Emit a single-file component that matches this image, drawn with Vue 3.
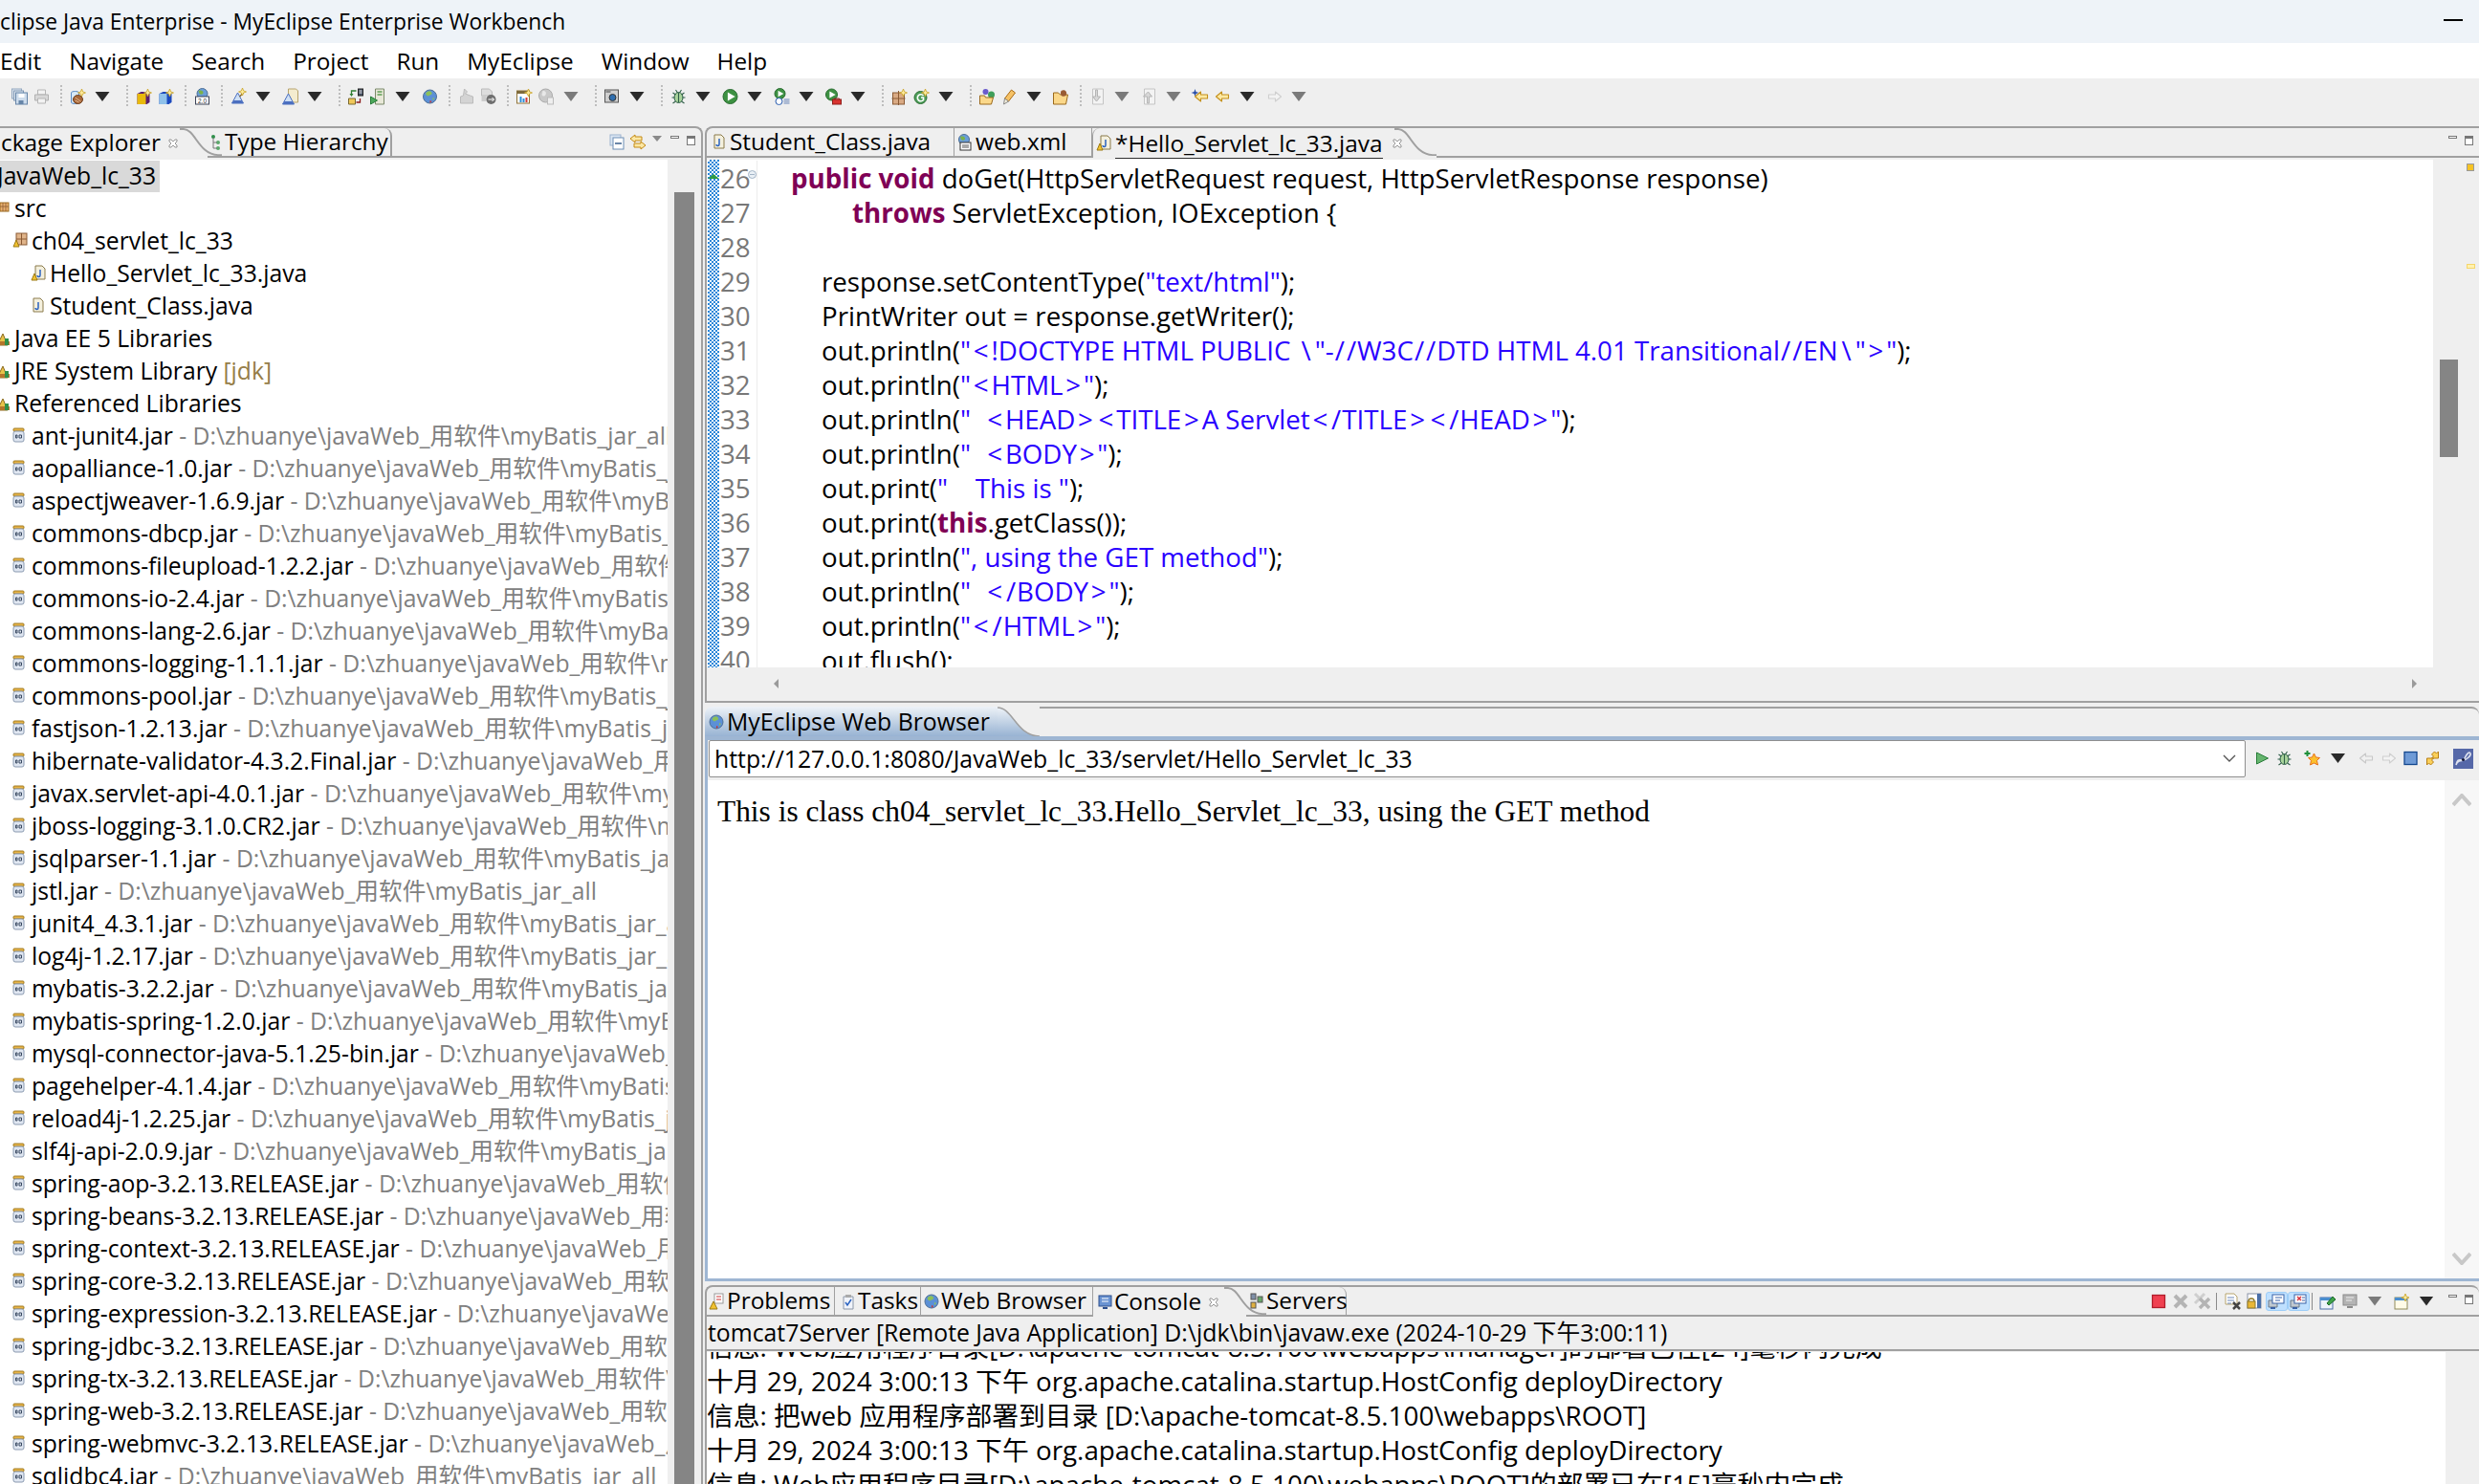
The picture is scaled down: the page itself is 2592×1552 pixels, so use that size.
<template>
  <div class="workbench">
    <div class="titlebar">
      <span class="title-text">clipse Java Enterprise - MyEclipse Enterprise Workbench</span>
      <span class="win-min"></span>
    </div>
    <div class="menubar">
      <span v-for="m in menus" :key="m" class="menu-item">{{ m }}</span>
    </div>
    <div class="toolbar">
      <template v-for="(t, i) in toolbar" :key="i">
        <span v-if="t === '|'" class="tb-sep"></span>
        <span v-else-if="t === 'v' || t === 'g'" class="tb-caret" :class="{ muted: t === 'g' }"></span>
        <svg v-else class="ic tb-ic" viewBox="0 0 18 18" v-html="icons[t]"></svg>
      </template>
    </div>

    <div class="main">
      <!-- package explorer -->
      <section class="left-panel">
        <div class="tabbar">
          <div class="tab pe-tab">
            <span>ckage Explorer</span>
            <svg class="close" viewBox="0 0 12 12" v-html="icons.close"></svg>
          </div>
          <svg class="tab-curve" viewBox="0 0 44 32" preserveAspectRatio="none"><path d="M0 1H4C16 1 20 29 40 29H44" fill="none" stroke="#a0a0a0" stroke-width="2" /></svg>
          <div class="tab th-tab">
            <svg class="ic" viewBox="0 0 18 18" v-html="icons.hierarchy"></svg>
            <span>Type Hierarchy</span>
          </div>
          <div class="tab-fill">
            <svg class="ic tool-a" viewBox="0 0 18 18" v-html="icons.collapse"></svg>
            <svg class="ic" viewBox="0 0 18 18" v-html="icons.link"></svg>
            <span class="view-menu"></span>
            <span class="min-btn"></span>
            <span class="max-btn"></span>
          </div>
        </div>
        <div class="left-body">
          <div class="tree">
            <div v-for="r in tree" :key="r.name" class="tree-row" :class="'d' + r.depth">
              <svg v-if="r.icon" class="ic tree-ic" viewBox="0 0 18 18" v-html="icons[r.icon]"></svg>
              <span class="tree-name" :class="{ selected: r.selected }">{{ r.name }}</span>
              <span v-if="r.deco" class="deco" :class="{ jdk: r.jdk }">&nbsp;{{ r.deco }}</span>
            </div>
          </div>
          <div class="vtrack">
            <div class="vthumb"></div>
          </div>
        </div>
      </section>

      <div class="right-col">
        <!-- editor -->
        <section class="editor-panel">
          <div class="tabbar">
            <div class="tab ed-tab tab-student">
              <svg class="ic" viewBox="0 0 18 18" v-html="icons.java"></svg>
              <span>Student_Class.java</span>
            </div>
            <div class="tab ed-tab tab-web">
              <svg class="ic" viewBox="0 0 18 18" v-html="icons.webxml"></svg>
              <span>web.xml</span>
            </div>
            <div class="tab ed-active">
              <svg class="ic" viewBox="0 0 18 18" v-html="icons.javaWarn"></svg>
              <span class="underlined">*Hello_Servlet_lc_33.java</span>
              <svg class="close" viewBox="0 0 12 12" v-html="icons.close"></svg>
            </div>
            <svg class="tab-curve" viewBox="0 0 44 32" preserveAspectRatio="none"><path d="M0 1H4C16 1 20 29 40 29H44" fill="none" stroke="#a0a0a0" stroke-width="2" /></svg>
            <div class="tab-fill">
              <span class="min-btn"></span>
              <span class="max-btn"></span>
            </div>
          </div>
          <div class="editor-body">
            <div class="ruler"></div>
            <div class="lines">
              <div v-for="l in code" :key="l.n" class="line">
                <span class="num">{{ l.n }}</span>
                <span class="src" :style="{ paddingLeft: l.indent * 32 + 'px' }"><span v-for="(p, i) in l.parts" :key="i" :class="p[0]">{{ p[1] }}</span></span>
              </div>
              <span class="fold"></span>
              <span class="override"></span>
            </div>
            <div class="overview">
              <span class="mark-a"></span>
              <span class="mark-b"></span>
              <div class="ed-thumb"></div>
            </div>
          </div>
          <div class="hscroll">
            <span class="arrow-l"></span>
            <span class="arrow-r"></span>
          </div>
        </section>

        <!-- browser -->
        <section class="browser-panel">
          <div class="browser-tabs">
            <div class="blue-tab">
              <svg class="ic" viewBox="0 0 18 18" v-html="icons.globe"></svg>
              <span>MyEclipse Web Browser</span>
              <svg class="close light" viewBox="0 0 12 12" v-html="icons.close"></svg>
            </div>
            <svg class="blue-curve" viewBox="0 0 44 31" preserveAspectRatio="none">
              <defs>
                <linearGradient id="blueGrad" x1="0" y1="0" x2="0" y2="1">
                  <stop offset="0" stop-color="#edf2f7" />
                  <stop offset="1" stop-color="#98b3d3" />
                </linearGradient>
              </defs>
              <path d="M0 1C16 1 20 31 44 31H0Z" fill="url(#blueGrad)" />
              <path d="M0 1C16 1 20 31 44 31" fill="none" stroke="#a0a0a0" stroke-width="1.5" />
            </svg>
            <div class="tab-fill plain"></div>
          </div>
          <div class="browser-frame">
            <div class="url-row">
              <div class="url-box">
                <span>http://127.0.0.1:8080/JavaWeb_lc_33/servlet/Hello_Servlet_lc_33</span>
                <svg class="combo" viewBox="0 0 14 8"><path d="M1 1l6 6 6-6" fill="none" stroke="#555" stroke-width="1.4" /></svg>
              </div>
              <svg v-for="b in browserTools" :key="b.i" class="ic tb-ic" :class="b.cls" viewBox="0 0 18 18" v-html="icons[b.i]"></svg>
              <span class="tb-caret br-caret"></span>
              <svg v-for="b in browserTools2" :key="b.i" class="ic tb-ic" :class="b.cls" viewBox="0 0 18 18" v-html="icons[b.i]"></svg>
              <svg class="br-logo" viewBox="0 0 21 21">
                <rect width="21" height="21" fill="#5668a8" />
                <path d="M3 17C6 9 9 16 12 10S17 3 18 5 14 12 10 12 5 10 3 17Z" fill="none" stroke="#dfe3ef" stroke-width="1.6" />
                <circle cx="10.500" cy="11.500" r="1.600" fill="#15193a" />
              </svg>
            </div>
            <div class="page-wrap">
              <div class="page">This is class ch04_servlet_lc_33.Hello_Servlet_lc_33, using the GET method</div>
              <div class="page-scroll">
                <svg class="page-arrow" viewBox="0 0 20 14"><path d="M1 12L10 2l9 10" fill="none" stroke="#c8c8c8" stroke-width="4" /></svg>
                <svg class="page-arrow" viewBox="0 0 20 14"><path d="M1 2l9 10 9-10" fill="none" stroke="#c8c8c8" stroke-width="4" /></svg>
              </div>
            </div>
          </div>
        </section>

        <!-- console -->
        <section class="console-panel">
          <div class="tabbar">
            <div class="tab con-tab tab-problems">
              <svg class="ic" viewBox="0 0 18 18" v-html="icons.problems"></svg>
              <span>Problems</span>
            </div>
            <div class="tab con-tab tab-tasks">
              <svg class="ic" viewBox="0 0 18 18" v-html="icons.tasks"></svg>
              <span>Tasks</span>
            </div>
            <div class="tab con-tab tab-web2">
              <svg class="ic" viewBox="0 0 18 18" v-html="icons.globe"></svg>
              <span>Web Browser</span>
            </div>
            <div class="tab con-active">
              <svg class="ic" viewBox="0 0 18 18" v-html="icons.monitor"></svg>
              <span>Console</span>
              <svg class="close" viewBox="0 0 12 12" v-html="icons.close"></svg>
            </div>
            <svg class="tab-curve con-curve" viewBox="0 0 44 32" preserveAspectRatio="none"><path d="M0 1H4C16 1 20 29 40 29H44" fill="none" stroke="#a0a0a0" stroke-width="2" /></svg>
            <div class="tab con-tab tab-servers">
              <svg class="ic" viewBox="0 0 18 18" v-html="icons.servers"></svg>
              <span>Servers</span>
            </div>
            <div class="tab-fill con-tools">
              <template v-for="(t, i) in consoleTools" :key="i">
                <span v-if="t === '|'" class="con-sep"></span>
                <span v-else-if="t === 'v' || t === 'g'" class="tb-caret" :class="{ muted: t === 'g' }"></span>
                <span v-else class="con-btn" :class="{ on: t === 'dispOut' || t === 'dispErr' }">
                  <svg class="ic" viewBox="0 0 18 18" v-html="icons[t]"></svg>
                </span>
              </template>
              <span class="min-btn"></span>
              <span class="max-btn"></span>
            </div>
          </div>
          <div class="status-row">tomcat7Server [Remote Java Application] D:\jdk\bin\javaw.exe (2024-10-29 下午3:00:11)</div>
          <div class="console-body">
            <div class="console-text">
              <div v-for="(c, i) in consoleLines" :key="i" class="con-line">{{ c }}</div>
            </div>
            <div class="con-stripe"></div>
          </div>
        </section>
      </div>
    </div>
  </div>
</template>

<script setup>
const menus = ['Edit', 'Navigate', 'Search', 'Project', 'Run', 'MyEclipse', 'Window', 'Help']

const toolbar = [
  'floppy', 'floppies', 'print', '|', 'wizJar', 'v', '|', 'cubeA', 'cubeB', '|', 'web20', '|',
  'flask', 'v', 'flaskDoc', 'v', '|', 'deploy', 'serverRun', 'v', 'globe', '|', 'grayJar', 'grayGo', '|',
  'chart', 'grayGlobe', 'g', '|', 'camera', 'v', '|', 'bug', 'v', 'run', 'v', 'runClock', 'v', 'runTool', 'v', '|',
  'pkgNew', 'classG', 'v', '|', 'openProj', 'pencil', 'v', 'folderBean', '|',
  'noteDown', 'g', 'noteUp', 'g', 'starBack', 'back', 'v', 'fwdGray', 'g'
]

const browserTools = [
  { i: 'play' },
  { i: 'bug' },
  { i: 'starPlus', cls: 'ml6' }
]
const browserTools2 = [
  { i: 'backGray', cls: 'ml2' },
  { i: 'fwdGray' },
  { i: 'square' },
  { i: 'refresh' }
]

const consoleTools = ['stop', 'grayX', 'grayXX', '|', 'docClear', 'lockDoc', 'dispOut', 'dispErr', '|', 'pin', 'grayMon', 'g', 'newCon', 'v']

const jarPath = 'D:\\zhuanye\\javaWeb_用软件\\myBatis_jar_all'
const jars = [
  'ant-junit4.jar', 'aopalliance-1.0.jar', 'aspectjweaver-1.6.9.jar', 'commons-dbcp.jar', 'commons-fileupload-1.2.2.jar',
  'commons-io-2.4.jar', 'commons-lang-2.6.jar', 'commons-logging-1.1.1.jar', 'commons-pool.jar', 'fastjson-1.2.13.jar',
  'hibernate-validator-4.3.2.Final.jar', 'javax.servlet-api-4.0.1.jar', 'jboss-logging-3.1.0.CR2.jar', 'jsqlparser-1.1.jar',
  'jstl.jar', 'junit4_4.3.1.jar', 'log4j-1.2.17.jar', 'mybatis-3.2.2.jar', 'mybatis-spring-1.2.0.jar',
  'mysql-connector-java-5.1.25-bin.jar', 'pagehelper-4.1.4.jar', 'reload4j-1.2.25.jar', 'slf4j-api-2.0.9.jar',
  'spring-aop-3.2.13.RELEASE.jar', 'spring-beans-3.2.13.RELEASE.jar', 'spring-context-3.2.13.RELEASE.jar',
  'spring-core-3.2.13.RELEASE.jar', 'spring-expression-3.2.13.RELEASE.jar', 'spring-jdbc-3.2.13.RELEASE.jar',
  'spring-tx-3.2.13.RELEASE.jar', 'spring-web-3.2.13.RELEASE.jar', 'spring-webmvc-3.2.13.RELEASE.jar', 'sqljdbc4.jar'
]

const tree = [
  { name: 'JavaWeb_lc_33', depth: 'x', selected: true },
  { name: 'src', depth: 0, icon: 'srcFolder' },
  { name: 'ch04_servlet_lc_33', depth: 1, icon: 'pkg' },
  { name: 'Hello_Servlet_lc_33.java', depth: 2, icon: 'javaWarn' },
  { name: 'Student_Class.java', depth: 2, icon: 'java' },
  { name: 'Java EE 5 Libraries', depth: 0, icon: 'lib' },
  { name: 'JRE System Library', depth: 0, icon: 'lib', deco: '[jdk]', jdk: true },
  { name: 'Referenced Libraries', depth: 0, icon: 'lib' },
  ...jars.map(j => ({ name: j, depth: 1, icon: 'jar', deco: '- ' + jarPath }))
]

// the editor font has wider brackets and slashes than ours, they get a bit of padding
const markChars = { '<': 'str br', '>': 'str br', '/': 'str sl', '\\': 'str bs' }
const str = s => s.split(/([<>/\\])/).filter(Boolean).map(c => [markChars[c] || 'str', c])

const code = [
  { n: 26, indent: 1, parts: [['kw', 'public void'], ['', ' doGet(HttpServletRequest request, HttpServletResponse response)']] },
  { n: 27, indent: 3, parts: [['kw', 'throws'], ['', ' ServletException, IOException {']] },
  { n: 28, indent: 0, parts: [] },
  { n: 29, indent: 2, parts: [['', 'response.setContentType('], ['str', '"text/html"'], ['', ');']] },
  { n: 30, indent: 2, parts: [['', 'PrintWriter out = response.getWriter();']] },
  { n: 31, indent: 2, parts: [['', 'out.println('], ...str('"<!DOCTYPE HTML PUBLIC \\"-//W3C//DTD HTML 4.01 Transitional//EN\\">"'), ['', ');']] },
  { n: 32, indent: 2, parts: [['', 'out.println('], ...str('"<HTML>"'), ['', ');']] },
  { n: 33, indent: 2, parts: [['', 'out.println('], ...str('"  <HEAD><TITLE>A Servlet</TITLE></HEAD>"'), ['', ');']] },
  { n: 34, indent: 2, parts: [['', 'out.println('], ...str('"  <BODY>"'), ['', ');']] },
  { n: 35, indent: 2, parts: [['', 'out.print('], ['str', '"    This is "'], ['', ');']] },
  { n: 36, indent: 2, parts: [['', 'out.print('], ['kw', 'this'], ['', '.getClass());']] },
  { n: 37, indent: 2, parts: [['', 'out.println('], ['str', '", using the GET method"'], ['', ');']] },
  { n: 38, indent: 2, parts: [['', 'out.println('], ...str('"  </BODY>"'), ['', ');']] },
  { n: 39, indent: 2, parts: [['', 'out.println('], ...str('"</HTML>"'), ['', ');']] },
  { n: 40, indent: 2, parts: [['', 'out.flush();']] }
]

const consoleLines = [
  '信息: Web应用程序目录[D:\\apache-tomcat-8.5.100\\webapps\\manager]的部署已在[24]毫秒内完成',
  '十月 29, 2024 3:00:13 下午 org.apache.catalina.startup.HostConfig deployDirectory',
  '信息: 把web 应用程序部署到目录 [D:\\apache-tomcat-8.5.100\\webapps\\ROOT]',
  '十月 29, 2024 3:00:13 下午 org.apache.catalina.startup.HostConfig deployDirectory',
  '信息: Web应用程序目录[D:\\apache-tomcat-8.5.100\\webapps\\ROOT]的部署已在[15]毫秒内完成'
]

// small pieces the 18x18 icons are put together from
const spark = (x, y) => `<path d="M${x} ${y - 4}l1.1 2.900 2.900 1.100-2.900 1.100-1.100 2.900-1.100-2.900-2.900-1.100 2.900-1.100z" fill="#fdeb9b" stroke="#c9a227" stroke-width=".8"/>`
const arrowL = (fill, stroke, dx = 0) => `<path transform="translate(${dx} 0)" d="M2 9l6-5v3h7v4H8v3z" fill="${fill}" stroke="${stroke}" stroke-width="1.100" stroke-linejoin="round"/>`
const arrowR = (fill, stroke) => `<path d="M16 9l-6-5v3H3v4h7v3z" fill="${fill}" stroke="${stroke}" stroke-width="1.100" stroke-linejoin="round"/>`
const globeShape = '<circle cx="9" cy="9" r="7" fill="#5c90d6" stroke="#4d6f96"/><path d="M6 4c2-1 4-1 5 1s-2 2-3 3-2 0-3-1 0-2 1-3zM12 10l2 1-2 2z" fill="#8cc05a"/><path d="M9 13l2 1-2 2z" fill="#c33"/>'
const runBall = (cx, cy, r) => `<circle cx="${cx}" cy="${cy}" r="${r}" fill="#3d9142" stroke="#2a6d31"/><path d="M${cx - r * 0.35} ${cy - r * 0.6}l${r * 1.05} ${r * 0.6}-${r * 1.05} ${r * 0.6}z" fill="#fff"/>`
const bugShape = '<ellipse cx="9" cy="10" rx="4.500" ry="5.500" fill="#a9d49c" stroke="#2f5e48"/><path d="M9 5v10M3 5l3 2M15 5l-3 2M2 10h3M16 10h-3M3 16l3-2M15 16l-3-2M6 2l2 3M12 2l-2 3" stroke="#2f5e48" fill="none" stroke-width="1.100"/>'

const icons = {
  close: '<path d="M2 2h2l2 2 2-2h2v2L8 6l2 2v2H8L6 8l-2 2H2V8l2-2-2-2z" fill="#fff" stroke="#8a8a8a" stroke-width=".9"/>',
  hierarchy: '<circle cx="6" cy="3" r="2" fill="#2f8f4a"/><circle cx="11" cy="9" r="2" fill="#5aa86a"/><circle cx="11" cy="15" r="2" fill="#5aa86a"/><path d="M6 4v11h4M6 9h4" fill="none" stroke="#777"/>',
  collapse: '<rect x="1" y="1" width="11" height="11" fill="#dbe6f3" stroke="#9db4cf"/><rect x="4" y="4" width="11" height="12" fill="#fff" stroke="#6d8eb5"/><path d="M6 10h7" stroke="#3a5f8c" stroke-width="1.500"/>',
  link: '<path d="M1 5l5-4v2h7v4H6v2z" fill="#fbe7a4" stroke="#c48a14"/><path d="M17 12l-5-4v2H5v4h7v2z" fill="#fbe7a4" stroke="#c48a14"/>',
  floppy: '<rect x="-6" y="3" width="13" height="13" fill="#e8e8e8" stroke="#bbb"/>',
  floppies: '<rect x="1" y="1" width="10" height="10" fill="#dfe7f0" stroke="#93a8c0"/><rect x="3" y="3" width="10" height="10" fill="#dfe7f0" stroke="#7e97b4"/><rect x="5" y="5" width="12" height="12" fill="#cddcec" stroke="#6685a8"/><rect x="8" y="6" width="6" height="4" fill="#fff"/><rect x="8" y="13" width="5" height="4" fill="#6685a8"/>',
  print: '<path d="M5 2h8v5H5z" fill="#f2f2f2" stroke="#b5b5b5"/><path d="M2 7h14v6H2z" fill="#d8d8d8" stroke="#b0b0b0"/><path d="M5 11h8v5H5z" fill="#f2f2f2" stroke="#b5b5b5"/>',
  wizJar: `<path d="M2 5c0-2 8-2 8 0v10c0 2-8 2-8 0z" fill="#d6e8f8" stroke="#5c8cc4"/><ellipse cx="9" cy="12" rx="5" ry="4.500" fill="#a8673a" stroke="#6e3f1e"/><path d="M6 10l6 4M6 13l4 2" stroke="#e0b48c"/>${spark(13, 5)}`,
  cubeA: `<path d="M2 6l4-2h9v11l-3 2H2z" fill="#5a1f6d"/><path d="M2 6h9v11H2z" fill="#e8b90c"/>${spark(13, 5)}`,
  cubeB: `<path d="M2 6l4-2h9v11l-3 2H2z" fill="#1b49bd"/><path d="M2 6h8v11H2z" fill="#8fc1ea"/>${spark(13, 5)}`,
  web20: '<circle cx="9" cy="6" r="5.500" fill="#6a9ed8" stroke="#4d6f96"/><path d="M5 3c3-1 5 0 5 2s-3 2-4 1z" fill="#7cb24a"/><rect x="2" y="9" width="14" height="8" fill="#fff" stroke="#3b4256"/><text x="9" y="15.500" font-size="6.500" font-family="Liberation Sans, sans-serif" text-anchor="middle" fill="#333">2.0</text>',
  flask: `<path d="M8 5L2 16h12z" fill="#cfe0f5" stroke="#4b6fc0"/><path d="M4 13h8l2 3H2z" fill="#4b6fc0"/><path d="M10 9l4-4" stroke="#8a6a2a" stroke-width="1.500"/>${spark(13, 4)}`,
  flaskDoc: '<path d="M7 1h8l2 2v12H7z" fill="#f4eccf" stroke="#b6a36c"/><path d="M7 6L1 17h12z" fill="#cfe0f5" stroke="#4b6fc0"/><path d="M3 14h8l2 3H1z" fill="#4b6fc0"/>',
  deploy: '<rect x="11" y="1" width="5" height="7" fill="#4a5568" stroke="#222"/><path d="M12 3h3M12 5h3" stroke="#ddd"/><path d="M9 3H4v4" fill="none" stroke="#2f7d32" stroke-width="1.300"/><path d="M2 6l2 3 2-3z" fill="#2f7d32"/><path d="M1 11h7v6H1z" fill="#f0c85a" stroke="#7a6a30"/><path d="M9 15h4v-4" fill="none" stroke="#8c1c1c" stroke-width="1.300"/>',
  serverRun: '<path d="M6 1h9v16H6z" fill="#e8e8d8" stroke="#7b8a6a"/><path d="M8 4h5M8 7h5" stroke="#5f9e55" stroke-width="1.500"/><path d="M1 9l7 4-7 4z" fill="#4ca85a" stroke="#2a7d3a"/>',
  globe: globeShape,
  grayJar: '<path d="M7 1l3 3-2 2 5 2 3 1v7H3V9l3-1z" fill="#d4d4d4" stroke="#bbb"/>',
  grayGo: '<path d="M2 1h8l3 3v4H2z" fill="#ddd" stroke="#bbb"/><path d="M2 8h5v6H2z" fill="#ccc"/><circle cx="12" cy="12" r="5" fill="#6f6f6f"/><path d="M9 12h6M13 10l2 2-2 2" fill="none" stroke="#fff"/>',
  chart: `<rect x="1" y="3" width="13" height="13" fill="#fff" stroke="#8f7336"/><path d="M1 3h13v3H1z" fill="#7d6a3c"/><path d="M4 15V9h2v6zM7 15v-4h2v4z" fill="#2f8ed8"/><path d="M10 15v-5h2v5z" fill="#cf3a3a"/>${spark(13, 5)}`,
  grayGlobe: '<circle cx="8" cy="8" r="7" fill="#c9c9c9" stroke="#aaa"/><path d="M5 3c3 0 4 2 3 4s-3 2-4 0z" fill="#e8e8e8"/><rect x="10" y="10" width="6" height="7" fill="#eee" stroke="#bbb"/>',
  camera: '<rect x="1" y="2" width="14" height="13" fill="#cfcfcf" stroke="#555"/><rect x="2" y="3" width="5" height="2" fill="#8a8a8a"/><circle cx="9" cy="10" r="3.500" fill="#2f6fb0" stroke="#333"/>',
  bug: bugShape,
  run: runBall(9, 9, 7.5),
  runClock: `${runBall(7, 6, 5.5)}<circle cx="6" cy="14" r="3.500" fill="#fff" stroke="#2a5db0"/><path d="M11 12h6M11 14h6M11 16h6" stroke="#6a86b8"/>`,
  runTool: `${runBall(7, 7, 6)}<rect x="8" y="12" width="9" height="5" fill="#d9332f" stroke="#8f1f1c"/><path d="M10 12v-1h5v1" fill="none" stroke="#8f1f1c"/>`,
  pkgNew: `<rect x="2" y="5" width="12" height="12" fill="#d9aa84" stroke="#8a5a34"/><path d="M8 3v15M1 11h14" stroke="#8a5a34"/>${spark(13, 5)}`,
  classG: `<circle cx="8" cy="10" r="6.500" fill="#4e9e5a" stroke="#2a6d31"/><path d="M11 8a3.500 3.500 0 1 0 0 4.500V10H8.500" fill="none" stroke="#fff" stroke-width="1.600"/>${spark(13, 5)}`,
  openProj: '<circle cx="7" cy="4" r="3" fill="#6a5acd"/><circle cx="13" cy="7" r="3.500" fill="#3f9e5a"/><path d="M1 8h5l1 2h8l-2 7H1z" fill="#fbd88a" stroke="#9c6a1c"/>',
  pencil: '<path d="M11 2l4 3-7 9-4-3z" fill="#f6c266" stroke="#a86a14"/><path d="M4 11l4 3-5 3z" fill="#f5f0dc" stroke="#888"/>',
  folderBean: '<path d="M1 5h5l2 2h8l-2 10H1z" fill="#fbd88a" stroke="#9c6a1c"/><path d="M9 3c4-2 7 1 5 5-3 2-7 0-5-5z" fill="#9a5c34"/>',
  noteDown: '<path d="M4 1h11v16H4z" fill="#f3f3f3" stroke="#c4c4c4"/><path d="M7 2v7H4l4 5 4-5H9V2z" fill="#d8d8d8" stroke="#b4b4b4"/>',
  noteUp: '<path d="M4 1h11v16H4z" fill="#f3f3f3" stroke="#c4c4c4"/><path d="M7 16V9H3l5-5 4 5H9v7z" fill="#d8d8d8" stroke="#b4b4b4"/>',
  starBack: `<path d="M3 1l1 3 3 1-3 1-1 3-1-3-3-1 3-1z" fill="#2a4fa8"/>${arrowL('#fde9a2', '#c4901c', 1)}`,
  back: arrowL('#fde9a2', '#c4901c'),
  backGray: arrowL('#f0f0f0', '#c8c8c8'),
  fwdGray: arrowR('#f3f3f3', '#cfcfcf'),
  play: '<path d="M3 3l12 6-12 6z" fill="#66b56e" stroke="#2a7d3a"/>',
  starPlus: '<path d="M11 4l2 4 4 .5-3 3 1 4.500-4-2-4 2 1-4.500-3-3 4-.5z" fill="#fbc02d" stroke="#e8701a"/><path d="M1 4h6M4 1v6" stroke="#1f8f3a" stroke-width="2"/>',
  square: '<rect x="2.500" y="2.500" width="13" height="13" fill="#6f9bd6" stroke="#14488f" stroke-width="1.300"/>',
  refresh: '<path d="M15 2v7h-7l2-2-2-2 3-3 2 2z" fill="#fbd05a" stroke="#b77f14"/><path d="M3 16V9h7l-2 2 2 2-3 3-2-2z" fill="#fbd05a" stroke="#b77f14"/>',
  problems: '<rect x="6" y="1" width="9" height="10" fill="#fff" stroke="#9a9a9a"/><path d="M8 4h5M8 7h5" stroke="#c33"/><path d="M5 9l4 8H1z" fill="#f2c230" stroke="#9b7a14"/>',
  tasks: '<path d="M4 4h10v13H4z" fill="#f0f3fa" stroke="#8b96a8"/><rect x="6" y="2" width="6" height="3" fill="#aaa"/><path d="M6 10l2 3 4-6" fill="none" stroke="#2a62c0" stroke-width="1.500"/>',
  monitor: '<rect x="2" y="2" width="13" height="11" fill="#6a93d2" stroke="#2c4e8c"/><path d="M5 5h7M5 8h7" stroke="#fff"/><path d="M6 15h5" stroke="#2c4e8c" stroke-width="2"/>',
  servers: '<rect x="3" y="1" width="5" height="6" fill="#7f8fa8" stroke="#555"/><rect x="10" y="4" width="5" height="6" fill="#6aa86a" stroke="#555"/><rect x="3" y="10" width="5" height="6" fill="#e0b040" stroke="#555"/>',
  stop: '<rect x="2.500" y="2.500" width="13" height="13" fill="#ef4050" stroke="#b01c2a" stroke-width="1.300"/>',
  grayX: '<path d="M3 3l12 12M15 3L3 15" stroke="#b4b4b4" stroke-width="4"/>',
  grayXX: '<path d="M1 1l10 10M11 1L1 11" stroke="#cfcfcf" stroke-width="3"/><path d="M6 6l10 10M16 6L6 16" stroke="#b4b4b4" stroke-width="3.500"/>',
  docClear: '<path d="M2 1h9l3 3v8H2z" fill="#fff" stroke="#b6a36c"/><path d="M4 5h7M4 8h7M4 11h4" stroke="#6a86b8"/><path d="M10 10l7 7M17 10l-7 7" stroke="#444" stroke-width="2.500"/>',
  lockDoc: '<rect x="2" y="1" width="14" height="15" fill="#fff" stroke="#8a93a8"/><rect x="12" y="1" width="4" height="15" fill="#4a6fa8"/><path d="M3 9a3 3 0 0 1 6 0" fill="none" stroke="#8f7a2a" stroke-width="1.300"/><rect x="2" y="9" width="8" height="7" fill="#e9b737" stroke="#8f7a2a"/>',
  dispOut: '<path d="M1 8h9v7H1z" fill="#c0c8d0" stroke="#6a7a8a"/><rect x="5" y="2" width="12" height="9" fill="#fff" stroke="#3a62a8"/><path d="M8 5h7M8 8h5" stroke="#3a62a8"/><path d="M3 16h5" stroke="#3a62a8" stroke-width="2"/>',
  dispErr: '<path d="M1 8h9v7H1z" fill="#c0c8d0" stroke="#6a7a8a"/><rect x="5" y="2" width="12" height="9" fill="#fff" stroke="#3a62a8"/><path d="M8 4l4 4M12 4L8 8" stroke="#d9333f" stroke-width="1.500"/><path d="M13 5h3M13 8h3" stroke="#3a62a8"/><path d="M3 16h5" stroke="#3a62a8" stroke-width="2"/>',
  pin: '<rect x="1" y="5" width="13" height="12" fill="#eef4fb" stroke="#4a6fa8"/><path d="M1 5h13v3H1z" fill="#4a8ed0"/><path d="M8 11l6-7 3 3-7 6z" fill="#3fa34a" stroke="#1f6a2a"/>',
  grayMon: '<rect x="2" y="2" width="14" height="11" fill="#b4b4b4" stroke="#8a8a8a"/><path d="M5 5h8M5 8h6" stroke="#eee"/><path d="M6 15h6" stroke="#8a8a8a" stroke-width="2"/>',
  newCon: `<rect x="2" y="5" width="13" height="12" fill="#fffbe8" stroke="#8f8a5a"/><path d="M2 5h13v3H2z" fill="#4a8ed0"/>${spark(13, 5)}`,
  srcFolder: '<g transform="translate(5 0)"><rect x="0" y="3" width="9" height="9" fill="#e8b070" stroke="#9c6a1c"/><path d="M3 3v9M6 3v9M0 7h9" stroke="#8a5a34" stroke-width=".8"/></g>',
  pkg: '<rect x="4" y="1" width="11" height="12" fill="#e0b48a" stroke="#8a5a34"/><path d="M9.500 1v12M4 7h11" stroke="#8a5a34"/><path d="M4 8l3 7H1z" fill="#f2c230" stroke="#9b7a14"/>',
  java: '<path d="M3 1h7l3 3v11H3z" fill="#f4f0de" stroke="#8a7a4a"/><path d="M8 5v6c0 2-3 2-3 0" fill="none" stroke="#2a62c0" stroke-width="1.500"/>',
  javaWarn: '<path d="M5 1h7l3 3v11H5z" fill="#f4f0de" stroke="#8a7a4a"/><path d="M10 5v6c0 2-3 2-3 0" fill="none" stroke="#2a62c0" stroke-width="1.500"/><path d="M4 9l3 7H1z" fill="#f2c230" stroke="#9b7a14"/>',
  webxml: '<circle cx="7" cy="6" r="5.500" fill="#6a9ed8" stroke="#4d6f96"/><path d="M3 3c3-1 5 0 5 2s-3 2-4 1z" fill="#7cb24a"/><rect x="3" y="9" width="11" height="8" fill="#fff" stroke="#333"/><path d="M5 12h7M5 14h7" stroke="#555"/>',
  lib: '<g transform="translate(5 0)"><path d="M3 4l5 12H-3z" fill="#e8c24a" stroke="#8a6a1c"/><path d="M0 12h10v4H0z" fill="#b5752a"/><path d="M5 9h4v7H5z" fill="#2f8f4a"/></g>',
  jar: '<rect x="1" y="1" width="11" height="3" rx="1" fill="#e8b447" stroke="#a07a22"/><rect x="1" y="4" width="11" height="11" rx="2" fill="#dfe6f1" stroke="#8a9ab0"/><path d="M3.500 8h1.500v3H3.500zM7 8h2.500v3H7z" fill="none" stroke="#3a4a62"/>'
}
</script>

<style scoped>
.workbench {
  width: 2592px;
  height: 1552px;
  overflow: hidden;
  display: flex;
  flex-direction: column;
  background: #efefef;
  color: #000;
  font-family: "Open Sans", "Noto Sans CJK SC", sans-serif;
  font-size: 24.800px;
}

.ic {
  width: 18px;
  height: 18px;
  flex: none;
  overflow: visible;
}

.titlebar {
  height: 45px;
  flex: none;
  background: #eef3f8;
  display: flex;
  align-items: center;
  justify-content: space-between;
  white-space: nowrap;
  font-size: 22.800px;
}

.title-text {
  margin-top: -1px;
}

.win-min {
  width: 20px;
  height: 2px;
  background: #000;
  margin: -3px 17px 0 0;
}

.menubar {
  height: 37px;
  flex: none;
  background: #fff;
  display: flex;
  align-items: center;
  gap: 29px;
  font-size: 24.300px;
}

.toolbar {
  height: 50px;
  flex: none;
  display: flex;
  align-items: center;
  margin-left: -14.500px;
  padding-bottom: 12px;
  box-sizing: border-box;
}

.tb-ic {
  width: 23px;
  padding: 0 2.500px;
  box-sizing: border-box;
  height: 18px;
}

.tb-caret {
  width: 31px;
  height: 10px;
  flex: none;
  background: #2a2a2a;
  clip-path: polygon(7px 0, 22px 0, 14.500px 10px);
}

.tb-caret.muted {
  background: #7a7a7a;
}

.tb-sep {
  width: 15px;
  height: 24px;
  flex: none;
  background: repeating-linear-gradient(to bottom, #bdbdbd 0 2px, transparent 2px 4px) no-repeat 8px 0 / 2px 100%;
}

.main {
  flex: 1;
  min-height: 0;
  display: flex;
}

.left-panel {
  width: 735px;
  flex: none;
  box-sizing: border-box;
  border-top: 2px solid #a0a0a0;
  border-right: 2px solid #a0a0a0;
  border-top-right-radius: 8px;
  display: flex;
  flex-direction: column;
}

.tabbar {
  height: 33px;
  flex: none;
  display: flex;
  align-items: stretch;
  white-space: nowrap;
  font-size: 24.400px;
}

.tab {
  display: flex;
  align-items: center;
  box-sizing: border-box;
  height: 31px;
}

.tab span {
  margin-top: -2px;
}

.tab-curve {
  width: 44px;
  height: 31px;
  flex: none;
  overflow: visible;
}

.tab-fill {
  flex: 1;
  height: 31px;
  box-sizing: border-box;
  border-bottom: 2px solid #a0a0a0;
  display: flex;
  align-items: flex-start;
  justify-content: flex-end;
  padding: 6px 6px 0 0;
}

.tab-fill.plain {
  border: 0;
  border-top: 2px solid #a0a0a0;
  border-top-right-radius: 8px;
}

.close {
  width: 12px;
  height: 12px;
  flex: none;
  margin-left: 7px;
}

.pe-tab {
  width: 188px;
  overflow: hidden;
  justify-content: flex-end;
  padding-right: 1px;
}

.th-tab {
  margin-left: -15px;
  width: 193px;
  border-right: 2px solid #a0a0a0;
  border-bottom: 2px solid #a0a0a0;
  border-top-right-radius: 8px;
}

.tool-a {
  margin-right: 3px;
}

.view-menu {
  width: 10px;
  height: 6px;
  margin: 2px 9px 0 6px;
  background: #8a8a8a;
  clip-path: polygon(0 0, 100% 0, 50% 100%);
  flex: none;
}

.min-btn {
  width: 7px;
  height: 1px;
  border: 1.500px solid #777;
  background: #fff;
  margin: 2px 8px 0 0;
  flex: none;
}

.max-btn {
  width: 7px;
  height: 5.500px;
  border: 1.500px solid #777;
  border-top-width: 3px;
  background: #fff;
  margin-top: 2px;
  flex: none;
}

.left-body {
  flex: 1;
  min-height: 0;
  display: flex;
}

.tree {
  width: 698px;
  flex: none;
  background: #fff;
  overflow: hidden;
  font-size: 24.700px;
}

.tree-row {
  height: 34px;
  line-height: 34px;
  display: flex;
  align-items: center;
  white-space: nowrap;
}

.tree-row.dx {
  margin-left: -3px;
}

.tree-ic {
  margin-right: 2px;
}

.tree-row.d0 .tree-ic {
  margin-left: -5px;
}

.tree-row.d1 .tree-ic {
  margin-left: 13px;
}

.tree-row.d2 .tree-ic {
  margin-left: 32px;
}

.tree-name.selected {
  background: #d9d9d9;
  width: 170px;
  height: 33px;
  display: inline-flex;
  align-items: center;
}

.deco {
  color: #808080;
}

.deco.jdk {
  color: #957d47;
}

.vtrack {
  flex: 1;
  padding: 34px 7px 0;
  display: flex;
}

.vthumb {
  flex: 1;
  background: #858585;
}

.right-col {
  flex: 1;
  min-width: 0;
  margin-left: 2px;
  display: flex;
  flex-direction: column;
}

.editor-panel {
  height: 603px;
  flex: none;
  box-sizing: border-box;
  border-top: 2px solid #a0a0a0;
  border-left: 2px solid #a0a0a0;
  border-bottom: 2px solid #a0a0a0;
  border-top-left-radius: 8px;
  display: flex;
  flex-direction: column;
}

.ed-tab {
  border-right: 1px solid #a0a0a0;
  border-bottom: 2px solid #a0a0a0;
  padding-left: 5px;
  gap: 1px;
}

.tab-student {
  width: 259px;
}

.tab-web {
  width: 144px;
  padding-left: 3px;
}

.ed-active {
  padding-left: 3px;
  width: 316px;
  border-left: 1px solid #a0a0a0;
  border-top-left-radius: 8px;
  gap: 2px;
}

.underlined {
  border-bottom: 1.500px solid #333;
  height: 31px;
  line-height: 31px;
  margin-top: 1px !important;
}

.editor-body {
  height: 531px;
  flex: none;
  display: flex;
  overflow: hidden;
  background: #fff;
}

.ruler {
  width: 12px;
  flex: none;
  margin-left: 1px;
  background: repeating-conic-gradient(#2a86d8 0 25%, #fff 0 50%) 0 0 / 4px 4px;
}

.lines {
  flex: 1;
  position: relative;
  padding-top: 1px;
  font-size: 27.700px;
}

.line {
  height: 36px;
  line-height: 36px;
  display: flex;
  align-items: center;
  white-space: pre;
}

.num {
  width: 40px;
  height: 36px;
  flex: none;
  box-sizing: border-box;
  border-right: 1px solid #ececec;
  padding-left: 1px;
  color: #787878;
  margin-right: 3px;
}

.src {
  display: block;
}

.kw {
  color: #7f0055;
  font-weight: 700;
}

.str {
  color: #2a00ff;
}

.br {
  padding: 0 2.800px;
}

.sl {
  padding: 0 1px;
}

.bs {
  padding: 0 4px;
}

.fold {
  position: absolute;
  left: 30px;
  top: 11px;
  width: 7px;
  height: 7px;
  border: 1px solid #a3b4c6;
  border-radius: 50%;
  background: linear-gradient(#a3b4c6, #a3b4c6) center / 5px 1px no-repeat #eaf0f6;
}

.override {
  position: absolute;
  left: -12px;
  top: 15px;
  width: 12px;
  height: 5px;
  background: #2e9b46;
  clip-path: polygon(50% 0, 100% 100%, 0 100%);
}

.overview {
  width: 48px;
  flex: none;
  background: #efefef;
  position: relative;
}

.mark-a {
  position: absolute;
  left: 35px;
  top: 4px;
  width: 6px;
  height: 6px;
  background: #f6c324;
  border: 1px solid #999;
}

.mark-b {
  position: absolute;
  left: 35px;
  top: 109px;
  width: 7px;
  height: 3px;
  background: #fff1b0;
  border: 1px solid #f5d66b;
}

.ed-thumb {
  position: absolute;
  left: 7px;
  top: 209px;
  width: 19px;
  height: 102px;
  background: #858585;
}

.hscroll {
  flex: 1;
  position: relative;
}

.arrow-l,
.arrow-r {
  position: absolute;
  top: 12px;
  width: 5px;
  height: 10px;
  background: #9a9a9a;
}

.arrow-l {
  left: 70px;
  clip-path: polygon(100% 0, 100% 100%, 0 50%);
}

.arrow-r {
  right: 65px;
  clip-path: polygon(0 0, 100% 50%, 0 100%);
}

.browser-panel {
  margin-top: 4px;
  height: 601px;
  flex: none;
  display: flex;
  flex-direction: column;
}

.browser-tabs {
  height: 31px;
  flex: none;
  display: flex;
  white-space: nowrap;
}

.blue-tab {
  width: 306px;
  flex: none;
  display: flex;
  align-items: center;
  box-sizing: border-box;
  padding-left: 3px;
  background: linear-gradient(#edf2f7, #98b3d3);
  border-top-left-radius: 8px;
  gap: 2px;
}

.blue-tab span {
  margin-top: -2px;
}

.close.light {
  margin-left: 5px;
}

.blue-curve {
  width: 44px;
  height: 31px;
  flex: none;
}

.browser-frame {
  flex: 1;
  min-height: 0;
  box-sizing: border-box;
  border: 3px solid #9eb6d3;
  border-top-width: 4px;
  border-right-width: 0;
  display: flex;
  flex-direction: column;
}

.url-row {
  height: 42px;
  flex: none;
  display: flex;
  align-items: center;
  padding: 0 0 4px 1px;
  box-sizing: border-box;
}

.url-box {
  width: 1607px;
  height: 39px;
  flex: none;
  box-sizing: border-box;
  border: 1.500px solid #8f8f8f;
  border-radius: 2px;
  background: #fff;
  display: flex;
  align-items: center;
  justify-content: space-between;
  padding: 0 9px 0 5px;
  margin-right: 6px;
  white-space: nowrap;
}

.url-box span {
  margin-top: -1px;
}

.combo {
  width: 14px;
  height: 8px;
}

.ml6 {
  margin-left: 6px;
}

.ml2 {
  margin-left: 2px;
}

.br-caret {
  margin-left: 1px;
}

.br-logo {
  width: 21px;
  height: 21px;
  flex: none;
  margin-left: 10px;
}

.page-wrap {
  flex: 1;
  min-height: 0;
  display: flex;
  background: #fff;
}

.page {
  flex: 1;
  padding: 12px 0 0 10px;
  font-family: "Liberation Serif", serif;
  font-size: 31.400px;
  line-height: 42px;
  white-space: nowrap;
}

.page-scroll {
  width: 36px;
  flex: none;
  background: #f7f7f7;
  display: flex;
  flex-direction: column;
  justify-content: space-between;
  align-items: center;
  padding: 14px 0 14px;
  box-sizing: border-box;
}

.page-arrow {
  width: 20px;
  height: 14px;
}

.console-panel {
  margin-top: 4px;
  flex: 1;
  min-height: 0;
  box-sizing: border-box;
  border-top: 2px solid #a0a0a0;
  border-left: 2px solid #a0a0a0;
  border-top-left-radius: 8px;
  border-top-right-radius: 8px;
  display: flex;
  flex-direction: column;
}

.con-tab {
  border-right: 1px solid #a0a0a0;
  border-bottom: 2px solid #a0a0a0;
  padding-left: 2px;
  gap: 1px;
}

.tab-problems {
  width: 134px;
}

.tab-tasks {
  width: 90px;
  padding-left: 5px;
}

.tab-web2 {
  width: 180px;
}

.con-active {
  width: 137px;
  padding-left: 4px;
  border-top-left-radius: 8px;
}

.con-curve {
  margin-right: -21px;
}

.tab-servers {
  width: 105px;
  border-top-right-radius: 8px;
}

.con-tools {
  padding-top: 0;
  align-items: center;
}

.con-tools .min-btn {
  align-self: flex-start;
  margin: 8px 8px 0 6.500px;
}

.con-tools .max-btn {
  align-self: flex-start;
  margin-top: 8px;
}

.con-sep {
  width: 1px;
  height: 18px;
  background: #8a8a8a;
  margin: 0 5px 0 2px;
  flex: none;
}

.con-btn {
  width: 23px;
  height: 20px;
  flex: none;
  display: flex;
  align-items: center;
  justify-content: center;
  box-sizing: border-box;
  border: 1px solid transparent;
}

.con-btn.on {
  background: #bfe0ff;
  border-color: #9dcdf7;
  border-radius: 3px;
}

.status-row {
  height: 34px;
  flex: none;
  box-sizing: border-box;
  border-bottom: 2px solid #a0a0a0;
  line-height: 29px;
  padding-left: 1px;
  white-space: nowrap;
}

.console-body {
  flex: 1;
  min-height: 0;
  display: flex;
  margin-top: 1px;
  background: #fff;
  overflow: hidden;
}

.console-text {
  flex: 1;
  min-width: 0;
  margin-top: -24px;
  font-size: 27.800px;
  white-space: nowrap;
}

.con-line {
  height: 36px;
  line-height: 36px;
}

.con-stripe {
  width: 35px;
  flex: none;
  background: #efefef;
}
</style>

<style>
html,
body {
  margin: 0;
  background: #efefef;
}
</style>
